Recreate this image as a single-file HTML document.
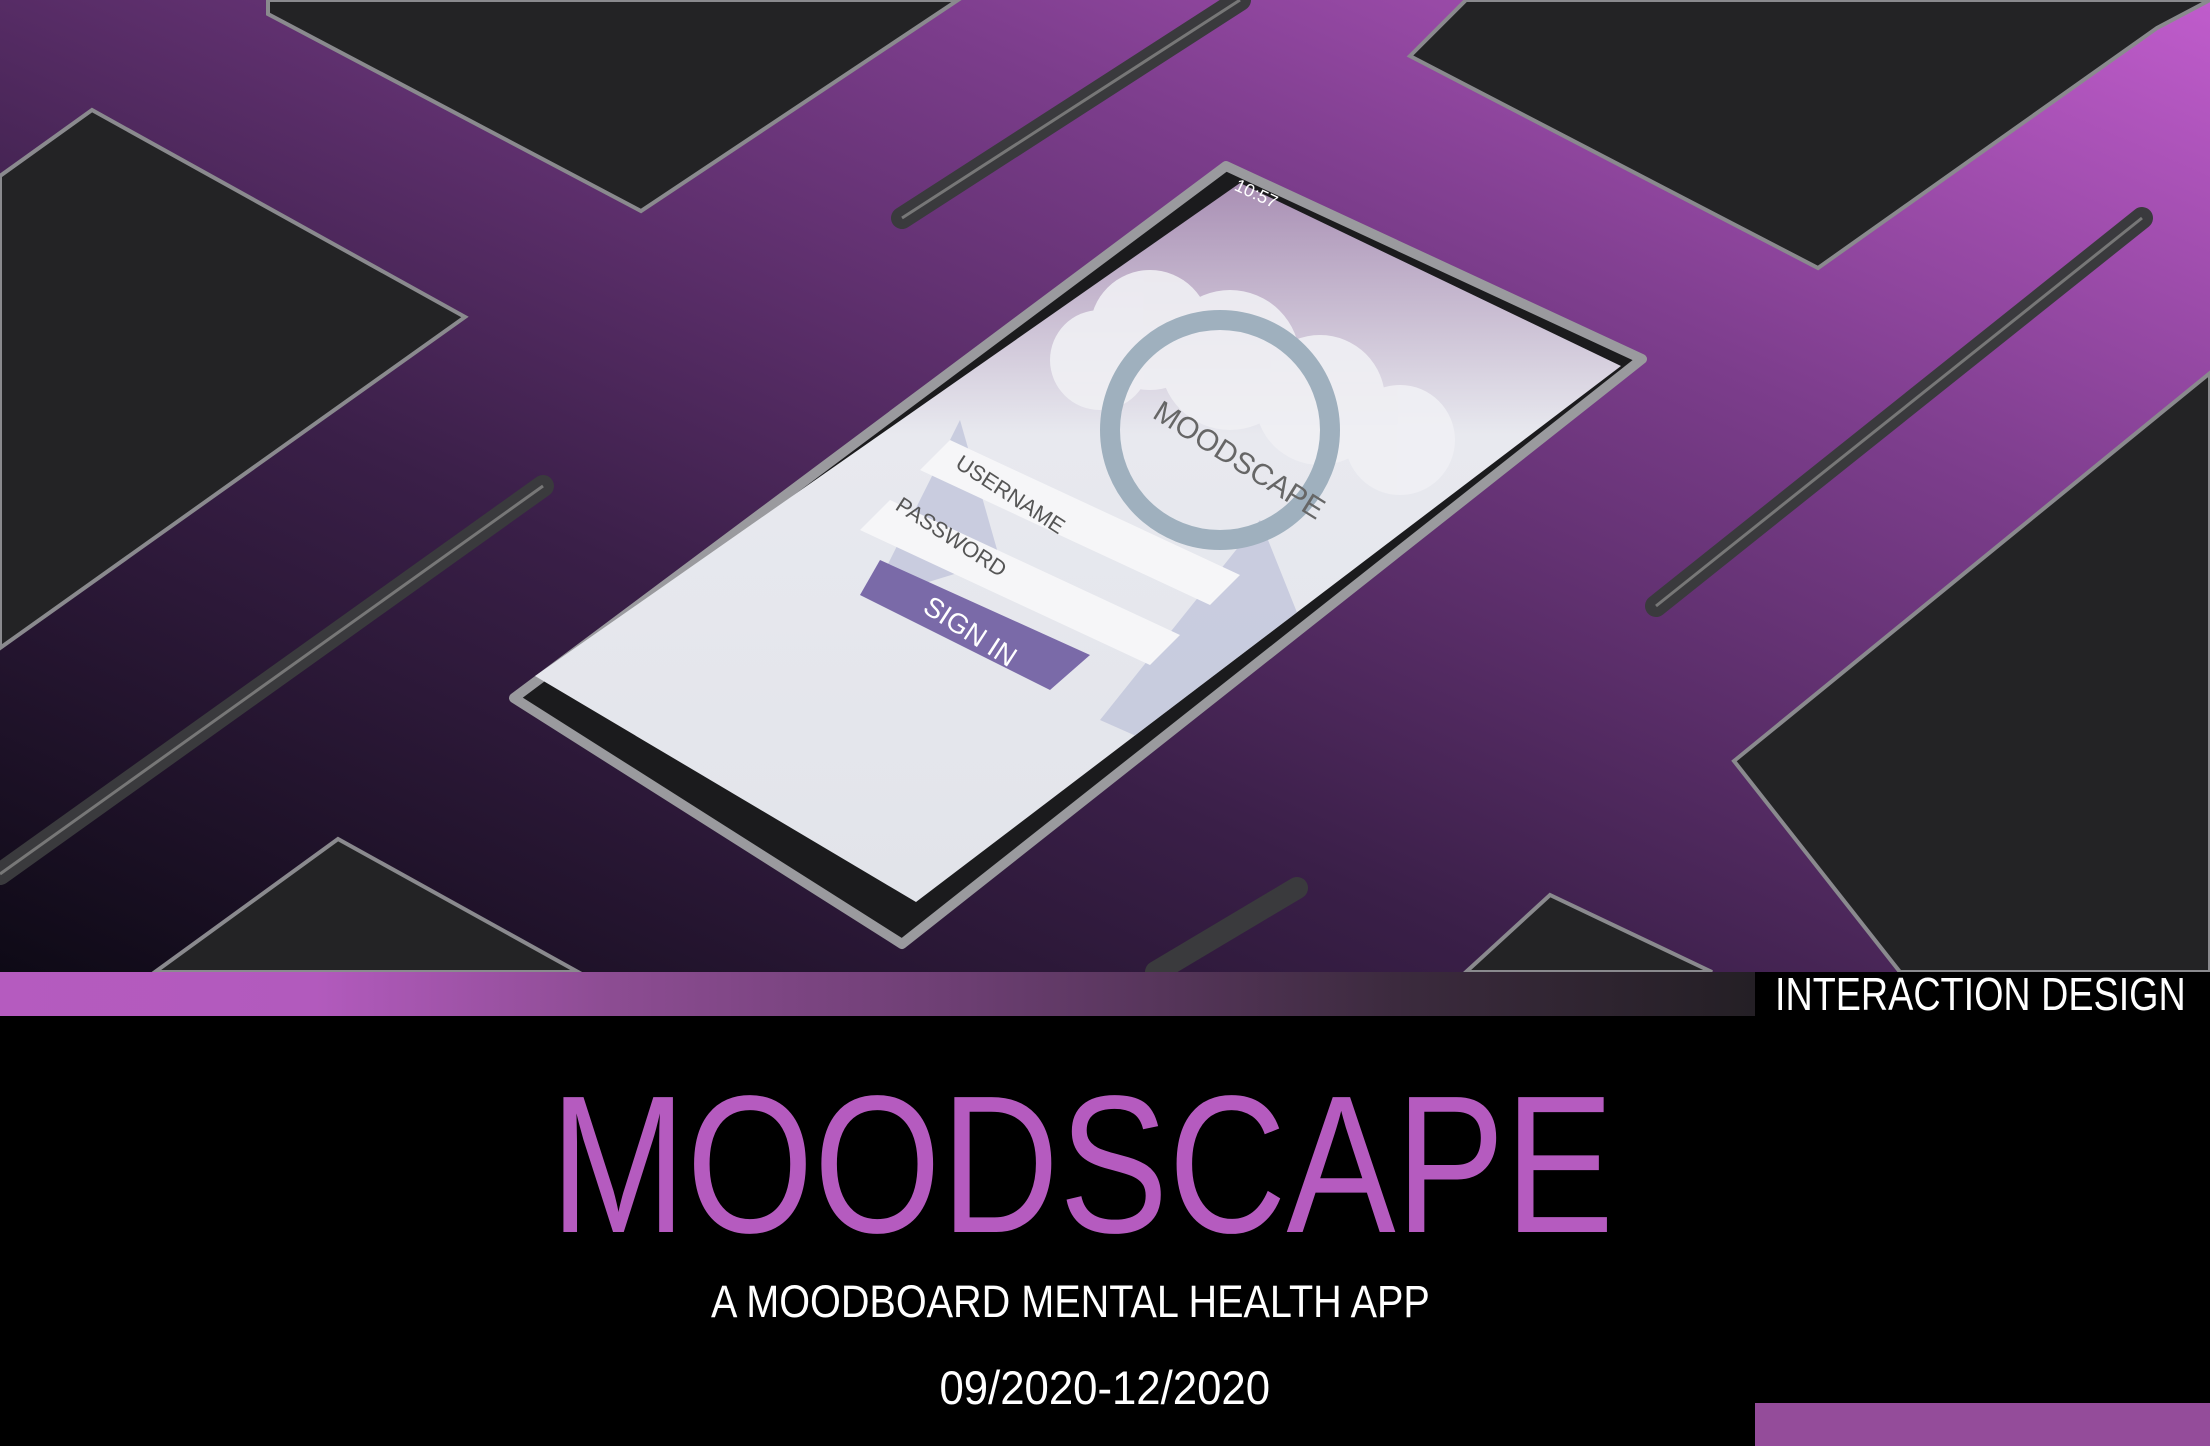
<!DOCTYPE html>
<html><head><meta charset="utf-8"><style>
html,body{margin:0;padding:0;background:#000;}
body{width:2210px;height:1446px;position:relative;overflow:hidden;font-family:"Liberation Sans",sans-serif;}
.hero{position:absolute;left:0;top:0;width:2210px;height:972px;}
.bar{position:absolute;left:0;top:972px;width:1755px;height:44px;background:linear-gradient(90deg,#b55bbf 0%,#b25abd 18%,#8c4c92 35%,#6c3e72 55%,#3b2a3d 80%,#241f25 100%);}
.tag{position:absolute;left:1755px;top:972px;width:455px;height:44px;background:#000;color:#fff;font-size:46px;line-height:44px;white-space:nowrap;}
.tag span{display:inline-block;transform:scaleX(0.82);transform-origin:left;margin-left:20px;}
.title{position:absolute;left:550px;top:1055px;font-size:196px;color:#b55bbf;white-space:nowrap;transform:scaleX(0.835);transform-origin:left;line-height:220px;}
.sub{position:absolute;left:0;width:2140px;top:1277px;text-align:center;color:#fff;font-size:45px;line-height:50px;}
.sub span{display:inline-block;transform:scaleX(0.88);}
.date{position:absolute;left:0;width:2210px;top:1362px;text-align:center;color:#fff;font-size:47px;line-height:52px;}
.date span{display:inline-block;transform:scaleX(0.93);}
.block{position:absolute;left:1755px;top:1403px;width:455px;height:43px;background:#944c9a;}
.st{position:absolute;color:#555;font-size:22px;white-space:nowrap;transform-origin:left top;}
</style></head><body>
<svg class="hero" width="2210" height="972" viewBox="0 0 2210 972">
<defs>
<linearGradient id="bg" x1="0" y1="1" x2="1" y2="0">
<stop offset="0" stop-color="#0e0a16"/><stop offset="0.35" stop-color="#3a1f48"/><stop offset="0.7" stop-color="#7c3d8c"/><stop offset="1" stop-color="#c05ccc"/>
</linearGradient>
<linearGradient id="scr" x1="0" y1="0" x2="0" y2="1">
<stop offset="0" stop-color="#a98fb4"/><stop offset="0.35" stop-color="#e8e9ef"/><stop offset="1" stop-color="#e2e4ea"/>
</linearGradient>
<clipPath id="sc"><polygon points="1240,183 1621,366 916,902 535,676"/></clipPath>
</defs>
<rect width="2210" height="972" fill="url(#bg)"/>
<g stroke="#8a8a8e" stroke-width="4" fill="#232325">
<polygon points="268,0 958,0 641,211 268,14"/>
<polygon points="92,110 465,317 0,648 0,176"/>
<polygon points="1410,56 1466,0 2210,0 2157,28 1818,268"/>
<polygon points="2210,373 1734,761 1900,972 2210,972"/>
<polygon points="155,972 338,839 578,972"/>
<polygon points="1466,972 1550,895 1712,972"/>
</g>
<g stroke="#3a3a3d" stroke-width="22" stroke-linecap="round">
<line x1="902" y1="218" x2="1240" y2="0"/>
<line x1="1656" y1="606" x2="2142" y2="218"/>
<line x1="0" y1="874" x2="543" y2="486"/>
<line x1="1156" y1="972" x2="1297" y2="888"/>
</g>
<g stroke="#777" stroke-width="3" fill="none">
<line x1="902" y1="218" x2="1240" y2="0"/>
<line x1="1656" y1="606" x2="2142" y2="218"/>
<line x1="0" y1="874" x2="543" y2="486"/>
</g>
<polygon points="1226,166 1642,359 902,944 514,698" fill="#1b1b1d" stroke="#9a9a9e" stroke-width="10" stroke-linejoin="round"/>
<polygon points="1240,183 1621,366 916,902 535,676" fill="url(#scr)"/>
<g clip-path="url(#sc)">
<g fill="#f0f0f4" opacity="0.9">
<circle cx="1150" cy="330" r="60"/><circle cx="1230" cy="360" r="70"/><circle cx="1320" cy="400" r="65"/><circle cx="1400" cy="440" r="55"/><circle cx="1100" cy="360" r="50"/>
</g>
<g fill="#bcc0d8" opacity="0.7">
<polygon points="1100,720 1260,520 1300,620 1190,760"/>
<polygon points="870,600 960,420 1000,560"/>
</g>
<circle cx="1220" cy="430" r="110" fill="none" stroke="#9fb0be" stroke-width="20"/>
<polygon points="950,440 1240,575 1210,605 920,470" fill="#f6f6f8"/>
<polygon points="890,500 1180,635 1150,665 860,530" fill="#f6f6f8"/>
<polygon points="880,560 1090,655 1050,690 860,595" fill="#7a6aa8"/>
</g>
</svg>
<div class="st" style="left:1165px;top:395px;transform:rotate(32deg);font-size:30px;color:#666;">MOODSCAPE</div>
<div class="st" style="left:965px;top:450px;transform:rotate(33deg);">USERNAME</div>
<div class="st" style="left:905px;top:492px;transform:rotate(33deg);">PASSWORD</div>
<div class="st" style="left:935px;top:590px;transform:rotate(33deg);color:#fff;font-size:28px;">SIGN IN</div>
<div class="st" style="left:1240px;top:175px;transform:rotate(25deg);color:#fff;font-size:18px;">10:57</div>
<div class="bar"></div>
<div class="tag"><span>INTERACTION DESIGN</span></div>
<div class="title">MOODSCAPE</div>
<div class="sub"><span>A MOODBOARD MENTAL HEALTH APP</span></div>
<div class="date"><span>09/2020-12/2020</span></div>
<div class="block"></div>
</body></html>
